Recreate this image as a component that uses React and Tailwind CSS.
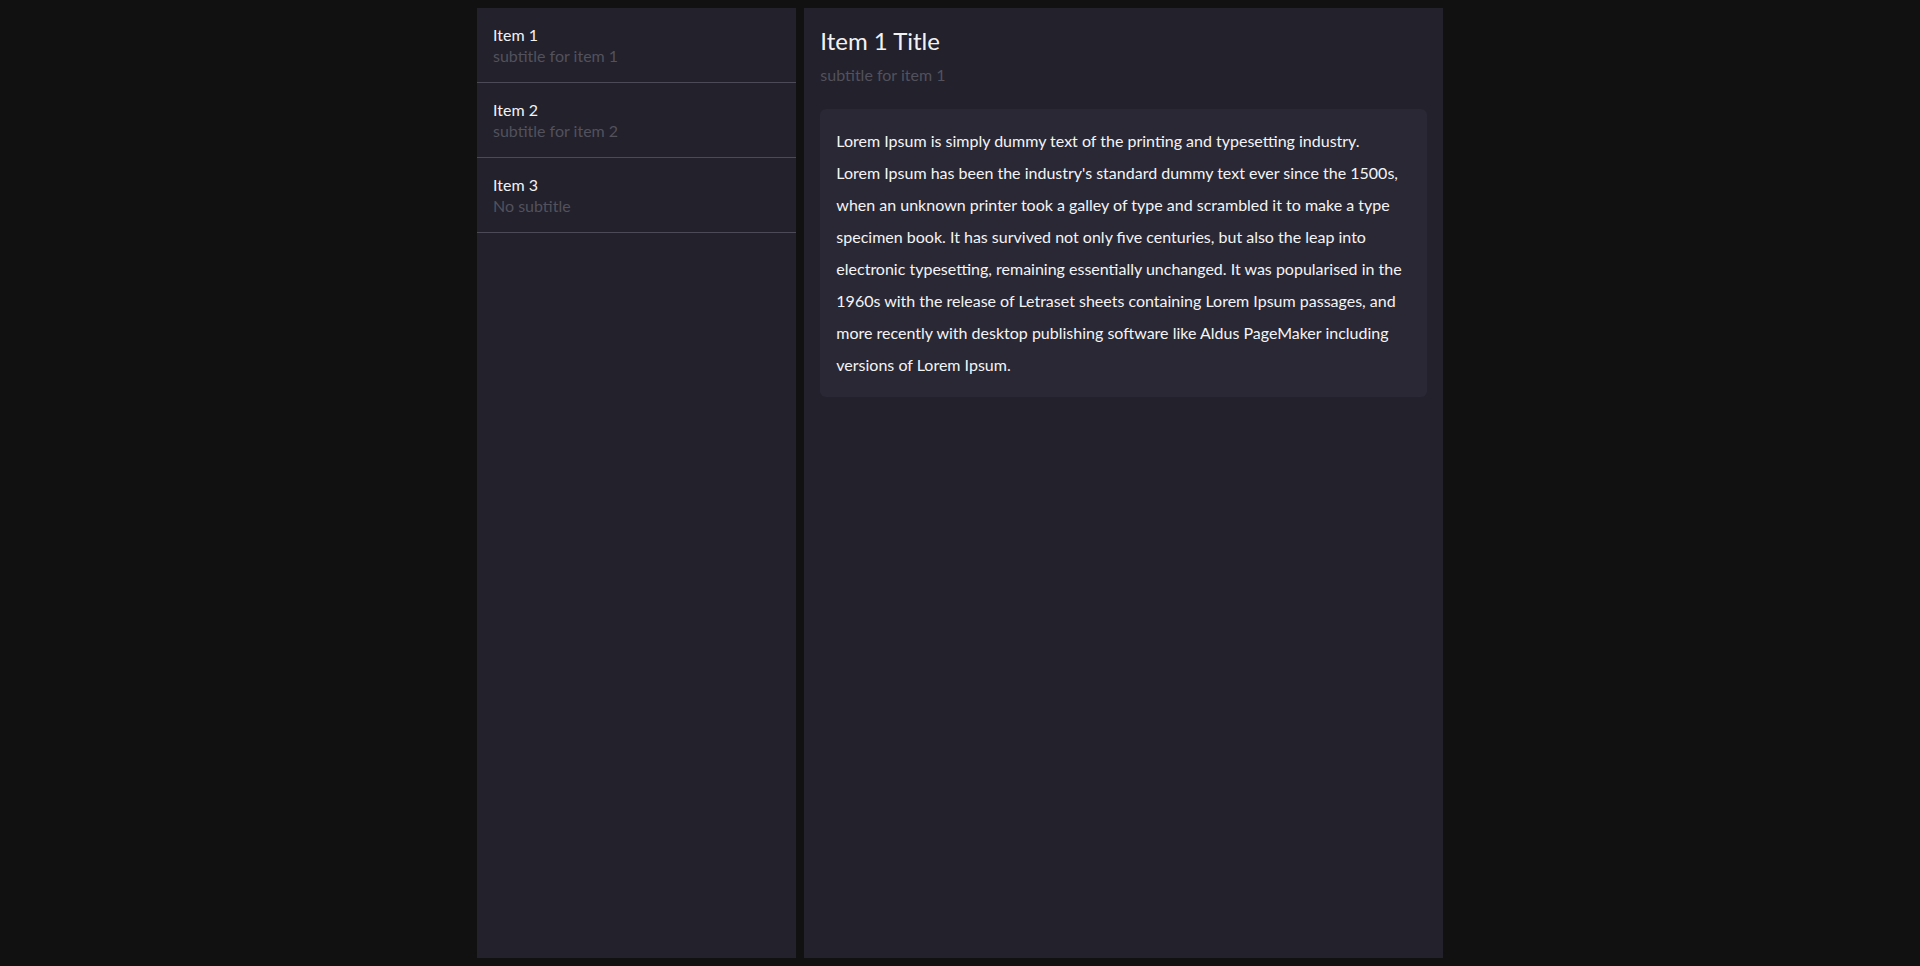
import React, { useState } from "react";

const items = [
  { id: 1, title: "Item 1", subtitle: "subtitle for item 1" },
  { id: 2, title: "Item 2", subtitle: "subtitle for item 2" },
  { id: 3, title: "Item 3", subtitle: null },
];

// broken the way the original wraps it
const bodyLines = [
  "Lorem Ipsum is simply dummy text of the printing and typesetting industry.",
  "Lorem Ipsum has been the industry's standard dummy text ever since the 1500s,",
  "when an unknown printer took a galley of type and scrambled it to make a type",
  "specimen book. It has survived not only five centuries, but also the leap into",
  "electronic typesetting, remaining essentially unchanged. It was popularised in the",
  "1960s with the release of Letraset sheets containing Lorem Ipsum passages, and",
  "more recently with desktop publishing software like Aldus PageMaker including",
  "versions of Lorem Ipsum.",
];

export default function App() {
  const [selected, setSelected] = useState(1);
  const current = items.find((i) => i.id === selected);

  return (
    <div className="h-screen bg-[#111111] p-2 font-['Lato','Open_Sans',sans-serif] text-[#eeeef0]">
      <div className="mx-auto grid h-full w-[966px] grid-cols-[1fr_2fr] gap-2">
        <ul className="bg-[#22212c]">
          {items.map((item) => (
            <li
              key={item.id}
              onClick={() => setSelected(item.id)}
              className="cursor-pointer border-b border-[#4b4a56] px-4 py-4"
            >
              <div className="text-base leading-[21px] text-[#f2f2f4]">{item.title}</div>
              <div className="text-base leading-[21px] text-[#52515c]">
                {item.subtitle || "No subtitle"}
              </div>
            </li>
          ))}
        </ul>

        <div className="bg-[#22212c] p-4">
          <h1 className="pt-px text-2xl leading-8 text-[#f2f2f4]">{current.title} Title</h1>
          <p className="mt-[7px] text-base leading-[21px] text-[#52515c]">
            {current.subtitle || "No subtitle"}
          </p>
          <div className="mt-6 rounded-md bg-[#292834] p-4 text-base leading-8 text-[#f4f4f6]">
            {bodyLines.map((line, i) => (
              <span key={i} className="block whitespace-nowrap">
                {line}
              </span>
            ))}
          </div>
        </div>
      </div>
    </div>
  );
}
